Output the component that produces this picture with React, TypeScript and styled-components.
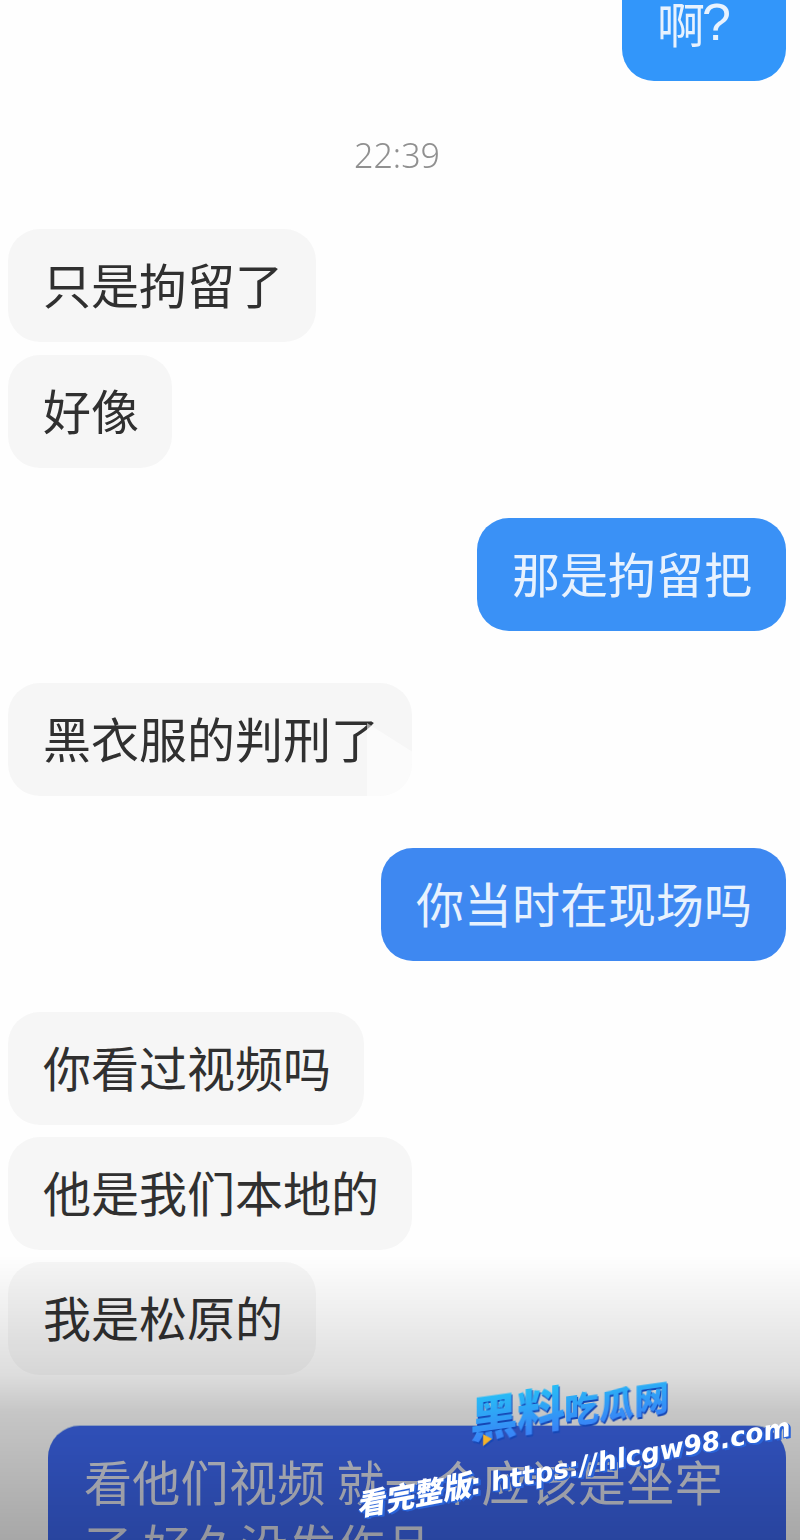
import * as React from 'react';
import styled, { createGlobalStyle } from 'styled-components';

const GlobalStyle = createGlobalStyle`
    html, body {
        margin: 0;
        padding: 0;
        background: #ffffff;
    }
`

const Page = styled.div`
    width: 800px;
    height: 1540px;
    position: relative;
    overflow: hidden;
    background: #fefefe;
    font-family: 'Noto Sans CJK SC', 'Liberation Sans', sans-serif;
`

const Thread = styled.div`
    display: flex;
    flex-direction: column;
    padding: 0 14px 0 8px;
    filter: blur(0.6px);
`

const Bubble = styled.div<{ $mine?: boolean; $color?: string; $top?: number }>`
    position: relative;
    box-sizing: border-box;
    align-self: ${props => props.$mine ? 'flex-end' : 'flex-start'};
    height: 113px;
    padding: 0 ${props => props.$mine ? 34 : 33}px 6px 35px;
    margin-top: ${props => props.$top ?? 0}px;
    display: flex;
    align-items: center;
    border-radius: 32px;
    font-size: 48px;
    line-height: 1;
    white-space: nowrap;
    color: ${props => props.$mine ? '#e8f2fe' : '#303030'};
    background: ${props => props.$color ?? '#f6f6f6'};
`

const Question = styled.span`
    display: inline-block;
    width: 47px;
    margin-left: -3px;
    margin-right: 3px;
    font-family: 'Liberation Sans', sans-serif;
    font-size: 52px;
`

const WideBubble = styled.div`
    box-sizing: border-box;
    margin: 51px 0 0 40px;
    height: 180px;
    padding: 22px 36px 0;
    border-radius: 32px;
    font-size: 48px;
    line-height: 64px;
    letter-spacing: 0.3px;
    color: #dfe2ee;
    background: #3e68f0;
    box-shadow: 0 -1px 0 rgba(130, 170, 240, 0.6);
`

const Time = styled.div`
    margin: 52px 0 52px;
    text-align: center;
    font-family: 'Noto Sans', sans-serif;
    font-size: 34px;
    line-height: 44px;
    font-weight: 300;
    color: #909090;
`

const Glare = styled.div`
    position: absolute;
    right: 0;
    top: 24px;
    width: 45px;
    height: 89px;
    background: rgba(255, 255, 255, 0.55);
    clip-path: polygon(0 18%, 100% 50%, 100% 100%, 0 100%);
    border-bottom-right-radius: 32px;
`

const Shade = styled.div`
    position: absolute;
    left: 0;
    right: 0;
    bottom: 0;
    height: 285px;
    pointer-events: none;
    background: linear-gradient(
        to bottom,
        rgba(0, 0, 0, 0) 0%,
        rgba(0, 0, 0, 0.13) 42%,
        rgba(0, 0, 0, 0.22) 55%,
        rgba(0, 0, 0, 0.34) 100%
    );
`

const SiteMark = styled.div`
    position: absolute;
    left: 470px;
    top: 1392px;
    font-family: 'Noto Sans CJK SC', sans-serif;
    font-size: 35px;
    line-height: 50px;
    font-weight: 900;
    white-space: nowrap;
    transform: skewY(-8deg);
    transform-origin: left bottom;
    filter: drop-shadow(1px 2px 0 #1546b4);
`

const MarkText = styled.span`
    color: transparent;
    background: linear-gradient(to bottom, #27bdf6, #3b7cf6);
    -webkit-background-clip: text;
    background-clip: text;
`

const BigMark = styled.span`
    font-size: 48px;
    letter-spacing: -1px;
`

const MarkPin = styled.svg`
    position: absolute;
    left: 13px;
    bottom: 0;
    width: 9px;
    height: 12px;
`

const LinkMark = styled.div`
    position: absolute;
    left: 360px;
    top: 1486px;
    font-family: 'DejaVu Sans', 'Noto Sans CJK SC', sans-serif;
    font-size: 26.5px;
    line-height: 40px;
    font-weight: 700;
    font-style: italic;
    white-space: nowrap;
    transform: rotate(-10.5deg);
    transform-origin: left bottom;
    color: #ffffff;
    text-shadow: 1px 1px 0 #2a63d8, -1px 1px 0 #2a63d8, 2px 2px 0 #2a63d8;
`

const HanMark = styled.span`
    font-size: 29px;
    font-weight: 900;
`

const App: React.FC = () => {
    return (
        <Page>
            <GlobalStyle />
            <Thread>
                <Bubble $mine $color="#3296fa" $top={-32}>啊<Question>?</Question></Bubble>
                <Time>22:39</Time>
                <Bubble>只是拘留了</Bubble>
                <Bubble $top={13}>好像</Bubble>
                <Bubble $mine $color="#3a91f6" $top={50}>那是拘留把</Bubble>
                <Bubble $top={52}>
                    黑衣服的判刑了
                    <Glare />
                </Bubble>
                <Bubble $mine $color="#3e88f1" $top={52}>你当时在现场吗</Bubble>
                <Bubble $top={51}>你看过视频吗</Bubble>
                <Bubble $top={12}>他是我们本地的</Bubble>
                <Bubble $top={12}>我是松原的</Bubble>
                <WideBubble>看他们视频 就一个应该是坐牢了 好久没发作品</WideBubble>
            </Thread>
            <Shade />
            <SiteMark>
                <MarkText><BigMark>黑料</BigMark>吃瓜网</MarkText>
                <MarkPin viewBox="0 0 9 12"><path d="M0 0 L9 6 L0 12 Z" fill="#f5b32a" /></MarkPin>
            </SiteMark>
            <LinkMark><HanMark>看完整版:</HanMark> https://hlcgw98.com</LinkMark>
        </Page>
    );
};

export default App;
